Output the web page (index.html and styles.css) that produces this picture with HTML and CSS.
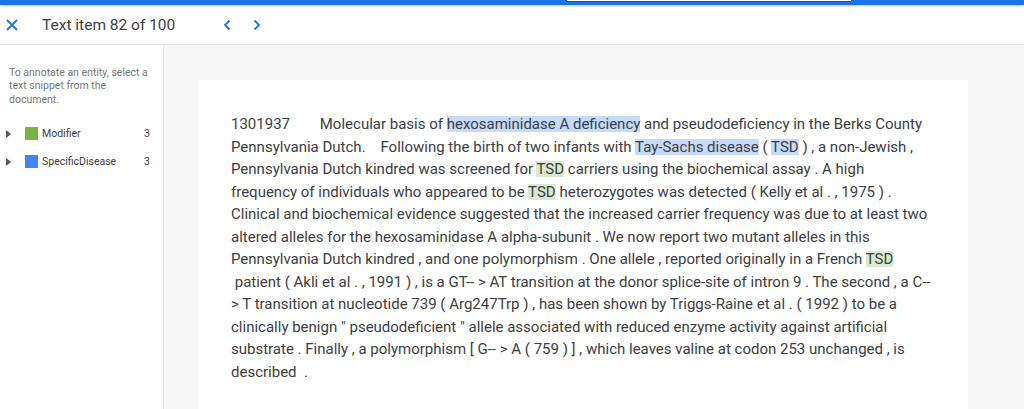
FILE: index.html
```html
<!DOCTYPE html>
<html>
<head>
<meta charset="utf-8">
<link rel="stylesheet" href="styles.css">
</head>
<body>
<div class="topbar"><div class="popup"></div></div>
<div class="header">
  <svg class="close" width="12" height="12" viewBox="0 0 12 12"><path d="M1 1L11 11M11 1L1 11" stroke="#1a73e8" stroke-width="1.8" fill="none"/></svg>
  <div class="title">Text item 82 of 100</div>
  <div class="nav">
    <svg width="10" height="12" viewBox="0 0 10 12"><path d="M7.5 1.5L3 6l4.5 4.5" stroke="#1a73e8" stroke-width="1.8" fill="none"/></svg>
    <svg width="10" height="12" viewBox="0 0 10 12"><path d="M2.5 1.5L7 6l-4.5 4.5" stroke="#1a73e8" stroke-width="1.8" fill="none"/></svg>
  </div>
</div>
<div class="layout">
  <div class="sidebar">
    <p class="hint">To annotate an entity, select a text snippet from the document.</p>
    <div class="entity">
      <span class="caret"></span>
      <span class="swatch green"></span>
      <span class="label">Modifier</span>
      <span class="count">3</span>
    </div>
    <div class="entity">
      <span class="caret"></span>
      <span class="swatch blue"></span>
      <span class="label">SpecificDisease</span>
      <span class="count">3</span>
    </div>
  </div>
  <div class="main">
    <div class="card">
<div class="doc">1301937        Molecular basis of <span class="hl-b">hexosaminidase A deficiency</span> and pseudodeficiency in the Berks County
Pennsylvania Dutch.    Following the birth of two infants with <span class="hl-b">Tay-Sachs disease</span> ( <span class="hl-b">TSD</span> ) , a non-Jewish ,
Pennsylvania Dutch kindred was screened for <span class="hl-g">TSD</span> carriers using the biochemical assay . A high
frequency of individuals who appeared to be <span class="hl-g">TSD</span> heterozygotes was detected ( Kelly et al . , 1975 ) .
Clinical and biochemical evidence suggested that the increased carrier frequency was due to at least two
altered alleles for the hexosaminidase A alpha-subunit . We now report two mutant alleles in this
Pennsylvania Dutch kindred , and one polymorphism . One allele , reported originally in a French <span class="hl-g">TSD</span>
 patient ( Akli et al . , 1991 ) , is a GT-- &gt; AT transition at the donor splice-site of intron 9 . The second , a C--
&gt; T transition at nucleotide 739 ( Arg247Trp ) , has been shown by Triggs-Raine et al . ( 1992 ) to be a
clinically benign " pseudodeficient " allele associated with reduced enzyme activity against artificial
substrate . Finally , a polymorphism [ G-- &gt; A ( 759 ) ] , which leaves valine at codon 253 unchanged , is
described  .</div>
    </div>
  </div>
</div>
</body>
</html>
```

FILE: styles.css
```css
* { box-sizing: border-box; }
html, body { margin: 0; height: 100%; overflow: hidden; }
body {
  font-family: Roboto, "Liberation Sans", Arial, sans-serif;
  color: #3c4043;
  background: #fff;
}
.topbar {
  height: 5px;
  background: #1a73e8;
  position: relative;
  box-shadow: 0 1px 3px rgba(0,0,0,0.25);
  z-index: 2;
}
.popup {
  position: absolute;
  left: 567px;
  top: 0;
  width: 284px;
  height: 2px;
  background: #fff;
  border-bottom: 1px solid #1c4f95;
}
.header {
  height: 40px;
  display: flex;
  align-items: center;
  border-bottom: 1px solid #e3e3e3;
  background: #fff;
}
.close { margin-left: 6px; }
.title {
  margin-left: 24px;
  font-size: 15.5px;
  color: #3c4043;
}
.nav {
  margin-left: 47px;
  display: flex;
  gap: 20px;
}
.nav svg { display: block; }
.layout {
  display: flex;
  height: calc(100% - 45px);
}
.sidebar {
  width: 164px;
  flex: none;
  background: #fff;
  border-right: 1px solid #e6e6e6;
  padding: 21px 8px 0 9px;
}
.hint {
  margin: 0 0 14px;
  font-size: 10.5px;
  line-height: 13.3px;
  color: #777;
}
.entity {
  display: flex;
  align-items: center;
  height: 28px;
  font-size: 10.5px;
  color: #3c4043;
}
.caret {
  width: 0; height: 0;
  border-top: 4px solid transparent;
  border-bottom: 4px solid transparent;
  border-left: 5px solid #555;
  margin-left: -3px;
  margin-right: 14px;
}
.swatch {
  width: 13px; height: 13px;
  margin-right: 4px;
}
.green { background: #7cb342; }
.blue { background: #4285f4; }
.label { flex: 1; }
.count { margin-right: 5px; }
.main {
  flex: 1;
  background: #f7f7f7;
  padding: 35px 56px 0 34px;
}
.card {
  background: #fff;
  height: 100%;
  padding: 33px 0 0 33px;
}
.doc {
  white-space: pre;
  font-size: 15px;
  line-height: 22.5px;
  color: #3c4043;
}
.hl-b { background: linear-gradient(#c6dafc, #c6dafc) center / 100% 16px no-repeat; }
.hl-g { background: linear-gradient(#d9ebcf, #d9ebcf) center / 100% 16px no-repeat; }
```
